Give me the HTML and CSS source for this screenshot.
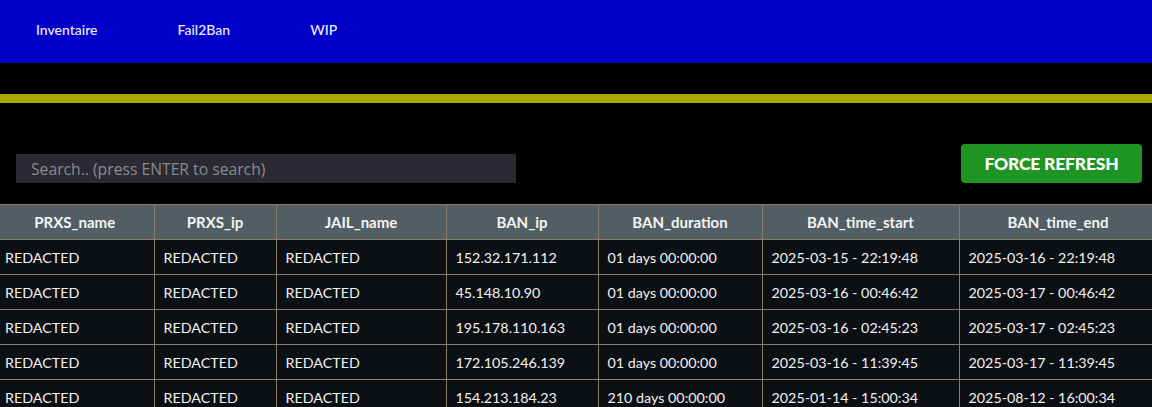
FILE: index.html
```html
<!DOCTYPE html>
<html lang="fr">
<head>
<meta charset="utf-8">
<title>Fail2Ban</title>
<link rel="stylesheet" href="styles.css">
</head>
<body>
<nav class="topnav">
  <a class="navlink" href="#">Inventaire</a>
  <a class="navlink" href="#">Fail2Ban</a>
  <a class="navlink" href="#">WIP</a>
</nav>
<div class="spacer"></div>
<div class="stripe"></div>
<div class="toolbar">
  <input class="search" type="text" placeholder="Search.. (press ENTER to search)">
  <button class="refresh" type="button">FORCE REFRESH</button>
</div>
<table class="bans">
  <colgroup>
    <col class="c1"><col class="c2"><col class="c3"><col class="c4"><col class="c5"><col class="c6"><col class="c7">
  </colgroup>
  <thead>
    <tr><th>PRXS_name</th><th>PRXS_ip</th><th>JAIL_name</th><th>BAN_ip</th><th>BAN_duration</th><th>BAN_time_start</th><th>BAN_time_end</th></tr>
  </thead>
  <tbody>
    <tr><td>REDACTED</td><td>REDACTED</td><td>REDACTED</td><td>152.32.171.112</td><td>01 days 00:00:00</td><td>2025-03-15 - 22:19:48</td><td>2025-03-16 - 22:19:48</td></tr>
    <tr><td>REDACTED</td><td>REDACTED</td><td>REDACTED</td><td>45.148.10.90</td><td>01 days 00:00:00</td><td>2025-03-16 - 00:46:42</td><td>2025-03-17 - 00:46:42</td></tr>
    <tr><td>REDACTED</td><td>REDACTED</td><td>REDACTED</td><td>195.178.110.163</td><td>01 days 00:00:00</td><td>2025-03-16 - 02:45:23</td><td>2025-03-17 - 02:45:23</td></tr>
    <tr><td>REDACTED</td><td>REDACTED</td><td>REDACTED</td><td>172.105.246.139</td><td>01 days 00:00:00</td><td>2025-03-16 - 11:39:45</td><td>2025-03-17 - 11:39:45</td></tr>
    <tr><td>REDACTED</td><td>REDACTED</td><td>REDACTED</td><td>154.213.184.23</td><td>210 days 00:00:00</td><td>2025-01-14 - 15:00:34</td><td>2025-08-12 - 16:00:34</td></tr>
  </tbody>
</table>
</body>
</html>
```
FILE: styles.css
```css
html, body {
  margin: 0;
  padding: 0;
  background: #000;
  overflow: hidden;
  font-family: "Lato", "DejaVu Sans", sans-serif;
  color: #f2f2f2;
}

.topnav {
  height: 63px;
  background: #0000c8;
  display: flex;
  align-items: center;
  padding-left: 36px;
}

.navlink {
  color: #ececff;
  text-decoration: none;
  font-size: 14px;
  font-weight: 500;
  padding-bottom: 4px;
  margin-right: 80px;
}

.spacer {
  height: 31px;
}

.stripe {
  height: 9px;
  background: #a8a800;
}

.toolbar {
  display: flex;
  justify-content: space-between;
  align-items: flex-end;
  padding: 0 10px 0 16px;
  height: 80px;
  margin-bottom: 21px;
}

.search {
  width: 500px;
  height: 29px;
  box-sizing: border-box;
  background: #2b2a33;
  border: none;
  outline: none;
  padding: 0 15px;
  font-family: "Open Sans", "Noto Sans", sans-serif;
  font-size: 15.7px;
  color: #ddd;
}

.search::placeholder {
  color: #8a8a8f;
}

.refresh {
  width: 181px;
  height: 39px;
  background: #1e9423;
  border: none;
  border-radius: 4px;
  color: #fff;
  font-family: "Lato", "DejaVu Sans", sans-serif;
  font-weight: 900;
  font-size: 17.5px;
  letter-spacing: -0.2px;
}

.bans {
  border-collapse: collapse;
  table-layout: fixed;
  width: 1157px;
  font-size: 14.3px;
}

.c1 { width: 154px; }
.c2 { width: 122px; }
.c3 { width: 170px; }
.c4 { width: 152px; }
.c5 { width: 164px; }
.c6 { width: 197px; }
.c7 { width: 198px; }

.bans th,
.bans td {
  border: 1px solid #8c7d67;
  height: 35px;
  padding: 0 9px;
  white-space: nowrap;
  box-sizing: border-box;
}

.bans th {
  background: #525e64;
  font-weight: 700;
  font-size: 15px;
  text-align: center;
  color: #f4f4f4;
}

.bans td {
  background: #0c0f13;
  text-align: left;
}

.bans th:first-child,
.bans td:first-child {
  border-left: none;
  padding-left: 5px;
}
```
